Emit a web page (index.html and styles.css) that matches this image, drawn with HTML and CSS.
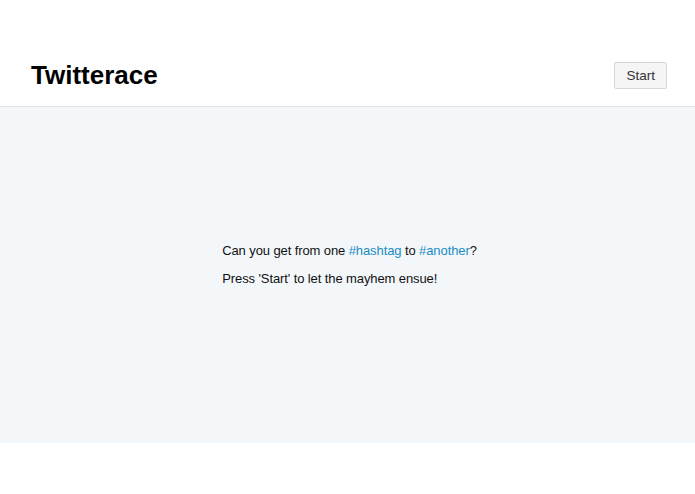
FILE: index.html
```html
<!DOCTYPE html>
<html>
<head>
<meta charset="utf-8">
<link rel="stylesheet" href="styles.css">
</head>
<body>
<header class="topbar">
  <h1 class="brand">Twitterace</h1>
  <button class="start-btn">Start</button>
</header>
<main class="stage">
  <div class="intro">
    <p>Can you get from one <a class="tag" href="#">#hashtag</a> to <a class="tag" href="#">#another</a>?</p>
    <p>Press 'Start' to let the mayhem ensue!</p>
  </div>
</main>
</body>
</html>
```
FILE: styles.css
```css
html, body {
  margin: 0;
  padding: 0;
  background: #ffffff;
  font-family: "Liberation Sans", Arial, sans-serif;
  color: #111;
}
.topbar {
  box-sizing: border-box;
  height: 107px;
  padding: 44px 28px 0 31px;
  display: flex;
  align-items: center;
  justify-content: space-between;
  border-bottom: 1px solid #e3e6e9;
}
.brand {
  margin: 0;
  font-size: 26px;
  font-weight: bold;
  color: #000;
}
.start-btn {
  font-family: "Liberation Sans", Arial, sans-serif;
  font-size: 13.5px;
  color: #333;
  background: #f5f5f5;
  border: 1px solid #d6d6d6;
  border-radius: 2px;
  height: 27px;
  padding: 0 11px;
}
.stage {
  height: 336px;
  background: #f4f7fa;
  box-sizing: border-box;
  padding-top: 136px;
  display: flex;
  justify-content: center;
}
.intro {
  padding-left: 4px;
}
.intro p {
  margin: 0 0 12px;
  font-size: 13px;
  letter-spacing: -0.1px;
  line-height: 16px;
  color: #111;
}
.tag {
  color: #1a8cc4;
  text-decoration: none;
}
```
